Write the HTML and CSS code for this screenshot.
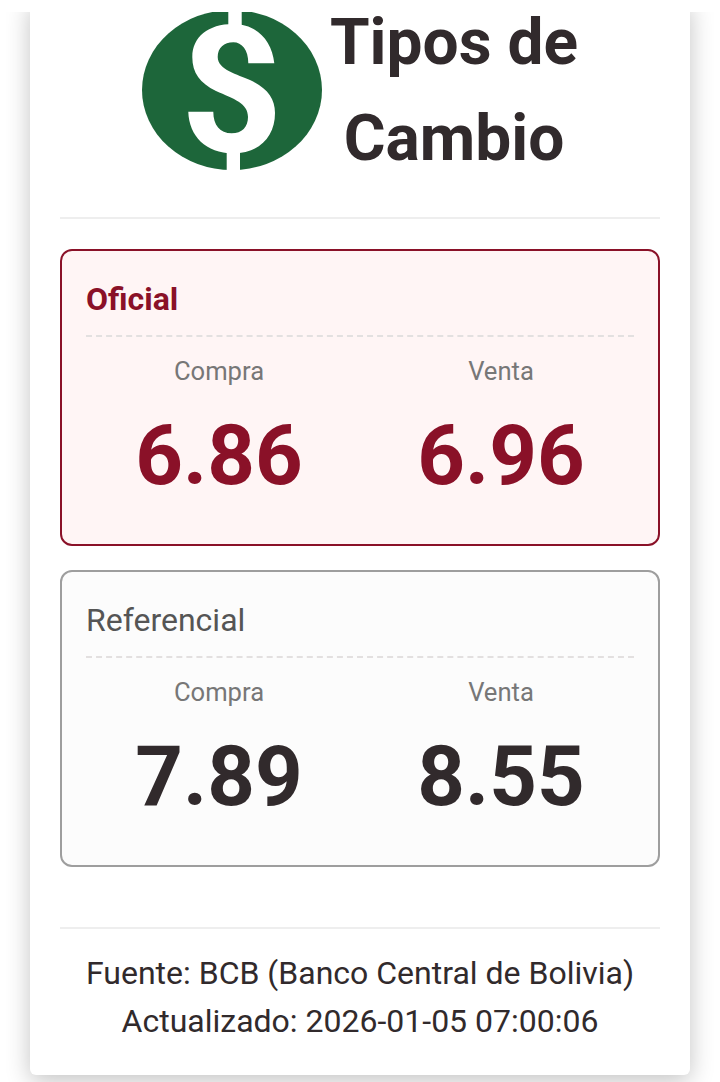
FILE: index.html
```html
<!DOCTYPE html>
<html lang="es">
<head>
  <meta charset="UTF-8">
  <meta name="viewport" content="width=device-width, initial-scale=1.0">
  <title>Tipos de Cambio</title>
  <link rel="stylesheet" href="styles.css">
</head>
<body>

<div class="top-strip"></div>

<main class="card">
  <header class="title-row">
    <svg class="logo" viewBox="0 0 180 160" aria-hidden="true">
      <ellipse cx="90" cy="80" rx="90" ry="80" fill="#1d663a"/>
      <path d="M132.3 53.3C130 30 114 14 91.3 14C66 14 50.3 27 50.3 47C50.3 63 58 73 74 81C92 89 106 93 106 107C106 117 100 123.3 89.7 123.3C78 123.3 71.3 115 71.3 101.7L46.3 101.7C47 126 64 143.3 91 143.3C118 143.3 133 126 133 103C133 88 125 78 108 70C96 64.5 75.7 60 75.7 47C75.7 38 82 32.3 91.3 32.3C100 32.3 106.3 40 106.3 53.3Z" fill="#fff"/>
      <rect x="86.3" y="0" width="13.4" height="18" fill="#fff"/>
      <rect x="84.7" y="140" width="13.3" height="20" fill="#fff"/>
    </svg>
    <h1 class="title">Tipos de Cambio</h1>
  </header>

  <hr class="divider">

  <section class="rate rate-official">
    <h2 class="rate-name">Oficial</h2>
    <div class="rate-values">
      <div class="rate-col">
        <span class="rate-label">Compra</span>
        <span class="rate-number">6.86</span>
      </div>
      <div class="rate-col">
        <span class="rate-label">Venta</span>
        <span class="rate-number">6.96</span>
      </div>
    </div>
  </section>

  <section class="rate rate-reference">
    <h2 class="rate-name">Referencial</h2>
    <div class="rate-values">
      <div class="rate-col">
        <span class="rate-label">Compra</span>
        <span class="rate-number">7.89</span>
      </div>
      <div class="rate-col">
        <span class="rate-label">Venta</span>
        <span class="rate-number">8.55</span>
      </div>
    </div>
  </section>

  <footer class="source">
    <p>Fuente: BCB (Banco Central de Bolivia)</p>
    <p>Actualizado: 2026-01-05 07:00:06</p>
  </footer>
</main>

</body>
</html>
```

FILE: styles.css
```css
html, body {
  height: 1082px;
  overflow: hidden;
}

body {
  font-family: 'Roboto', 'Liberation Sans', sans-serif;
  background-color: #fff;
  color: #312a2c;
  margin: 0;
  padding: 0;
}

.top-strip {
  position: absolute;
  top: 0;
  left: 0;
  right: 0;
  height: 12px;
  background-color: #fff;
  z-index: 2;
}

.card {
  box-sizing: border-box;
  width: 660px;
  height: 1075px;
  margin: 0 30px;
  padding: 10px 30px 0;
  background-color: #fff;
  border-radius: 0 0 6px 6px;
  box-shadow: 0 6px 24px rgba(0, 0, 0, 0.24);
}

.title-row {
  display: flex;
  align-items: flex-start;
  height: 207px;
}

.logo {
  width: 180px;
  height: 160px;
  flex: none;
  margin-left: 82px;
}

.title {
  width: 260px;
  margin: -15px 0 0 2px;
  font-size: 64px;
  line-height: 96px;
  font-weight: 700;
  text-align: center;
}

.divider {
  height: 2px;
  margin: 0;
  border: 0;
  background-color: #eee;
}

.rate {
  box-sizing: border-box;
  height: 297px;
  padding: 25px 24px 0;
  border: 2px solid;
  border-radius: 12px;
}

.rate-official {
  margin-top: 30px;
  border-color: #8a1128;
  background-color: #fff5f5;
}

.rate-reference {
  margin-top: 24px;
  border-color: #9e9e9e;
  background-color: #fcfcfc;
}

.rate-name {
  margin: 0;
  padding-bottom: 13px;
  border-bottom: 2px dashed #e3e0e0;
  font-size: 32px;
  line-height: 46px;
  font-weight: 400;
  color: #555;
}

.rate-official .rate-name {
  font-weight: 700;
  color: #8a1128;
}

.rate-values {
  display: grid;
  grid-template-columns: 1fr 1fr;
  gap: 16px;
  margin-top: 16px;
  text-align: center;
}

.rate-col {
  display: flex;
  flex-direction: column;
}

.rate-label {
  font-size: 25.6px;
  line-height: 36px;
  color: #777;
}

.rate-number {
  margin-top: 17px;
  font-size: 83.2px;
  line-height: 100px;
  font-weight: 700;
  color: #312a2c;
}

.rate-official .rate-number {
  color: #8a1128;
}

.source {
  margin-top: 60px;
  padding-top: 20px;
  border-top: 2px solid #eee;
  text-align: center;
  font-size: 32px;
  line-height: 48px;
}

.source p {
  margin: 0;
}
```
